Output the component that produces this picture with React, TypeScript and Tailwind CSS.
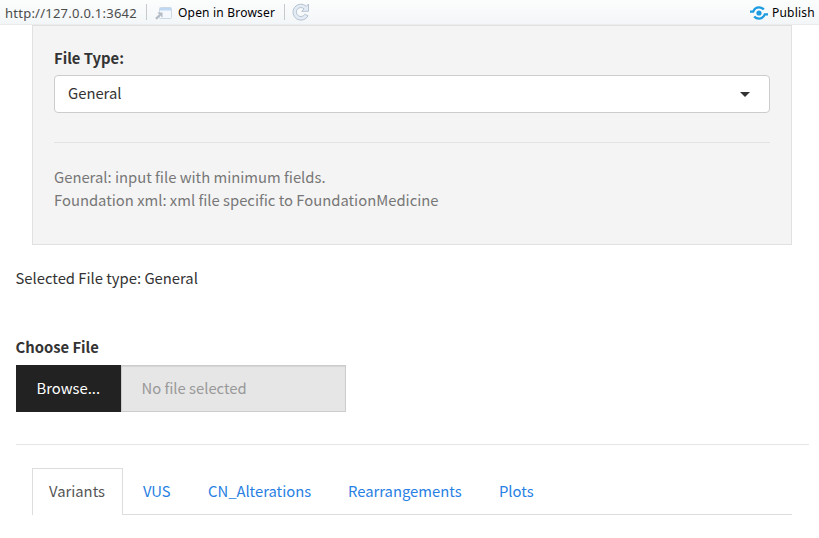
const tabs = [
  { name: 'VUS', cls: 'w-[65px]' },
  { name: 'CN_Alterations', cls: 'w-[140px]' },
  { name: 'Rearrangements', cls: 'w-[151px]' },
  { name: 'Plots', cls: 'w-[60px]' },
];

function BrowserIcon() {
  return (
    <svg width="18" height="14" viewBox="0 0 18 14" className="shrink-0">
      <rect x="4.5" y="1.5" width="12" height="11" rx="1" fill="#f5f8fc" stroke="#cbd9e7" />
      <path d="M5 2h11v2.5H5z" fill="#bfd8f2" />
      <path d="M1 12.9L4.6 9.3" stroke="#b3bbc4" strokeWidth="2.2" />
      <path d="M2.3 6.5h5.2v5.3z" fill="#b3bbc4" />
    </svg>
  );
}

function RefreshIcon() {
  return (
    <svg width="18" height="18" viewBox="0 0 18 18" className="shrink-0">
      <path
        d="M16.5 1v7.3H9.7l2.4-2.4A4.5 4.5 0 1 0 12.7 11.4l3.4 1.4A8 8 0 1 1 14.4 3.3z"
        fill="#e3ebf5"
        stroke="#b7c3d2"
        strokeLinejoin="round"
      />
    </svg>
  );
}

function PublishIcon() {
  return (
    <svg width="18" height="14" viewBox="0 0 18 14" className="shrink-0">
      <circle cx="9" cy="7" r="2.6" fill="#1b9be0" />
      <path d="M0 5.6H3.2C4.3 2.8 6.4 1.4 9 1.4c2 0 3.6.8 4.8 2.2" fill="none" stroke="#1b9be0" strokeWidth="2.3" />
      <path d="M18 8.4h-3.2C13.7 11.2 11.6 12.6 9 12.6c-2 0-3.6-.8-4.8-2.2" fill="none" stroke="#1b9be0" strokeWidth="2.3" />
    </svg>
  );
}

export default function App() {
  return (
    <div className="h-[538px] w-[819px] overflow-hidden bg-white font-['Noto_Sans_CJK_SC',sans-serif] text-[14.8px] leading-[23px] text-[#333333]">
      <header className="flex h-[25px] items-center border-b border-[#e9ebec] bg-linear-to-b from-[#fcfdfd] to-[#f3f6f8] pl-[5px] font-['Noto_Sans',sans-serif] text-[12px] leading-[16px] whitespace-nowrap">
        <span className="w-[141px] pt-[2px] text-[13px] tracking-[0.24px] text-[#4c4c4c]">http://127.0.0.1:3642</span>
        <span className="h-4 w-px bg-[#c5cacd]" />
        <span className="ml-[8px] flex pt-px"><BrowserIcon /></span>
        <span className="ml-[5px] w-[106px] pt-[2px] tracking-[0.2px] text-black">Open in Browser</span>
        <span className="h-4 w-px bg-[#c5cacd]" />
        <span className="ml-[7px] flex"><RefreshIcon /></span>
        <span className="ml-auto flex pt-[2px]"><PublishIcon /></span>
        <span className="ml-[4px] w-[47px] pt-[2px] tracking-[0.2px] text-black">Publish</span>
      </header>
      <section className="ml-8 h-[220px] w-[760px] border border-[#e1e1e1] bg-[#f4f4f4] px-[21px] pt-[20px]">
        <label className="block font-bold">File Type:</label>
        <div className="mt-[6px] flex h-[38px] items-center justify-between rounded-[4px] border border-[#cccccc] bg-white pr-[19px] pl-[13px]">
          <span className="pb-[3px]">General</span>
          <span className="h-0 w-0 border-x-[5px] border-t-[5px] border-x-transparent border-t-[#333333]" />
        </div>
        <hr className="mt-[29px] border-[#e3e3e3]" />
        <p className="mt-[22px] text-[#777777]">General: input file with minimum fields.<br />Foundation xml: xml file specific to FoundationMedicine</p>
      </section>
      <p className="mt-[21px] ml-[15.5px]">Selected File type: General</p>
      <label className="mt-[46px] ml-[15.5px] block font-bold">Choose File</label>
      <div className="mt-[7px] ml-4 flex h-[47px] w-[330px]">
        <button className="w-[105px] bg-[#222222] pb-[2px] pl-[20.5px] text-left text-white">Browse...</button>
        <div className="flex flex-1 items-center border border-[#cccccc] bg-[#e6e6e6] pb-[2px] pl-[19.5px] text-[#999999] shadow-[inset_0_1px_1px_rgba(0,0,0,0.075)]">No file selected</div>
      </div>
      <hr className="mt-[32px] ml-4 w-[793px] border-[#e6e6e6]" />
      <nav className="mt-[23px] ml-8 flex h-[47px] w-[760px] items-stretch">
        <a className="flex w-[91px] items-center border border-b-0 border-[#dddddd] pb-[3px] pl-[16px] text-[#555555]">Variants</a>
        <div className="flex flex-1 items-center border-b border-[#dddddd] pb-[1px] pl-[20px] text-[#2780e3]">
          {tabs.map((t) => <a key={t.name} className={t.cls}>{t.name}</a>)}
        </div>
      </nav>
    </div>
  );
}
